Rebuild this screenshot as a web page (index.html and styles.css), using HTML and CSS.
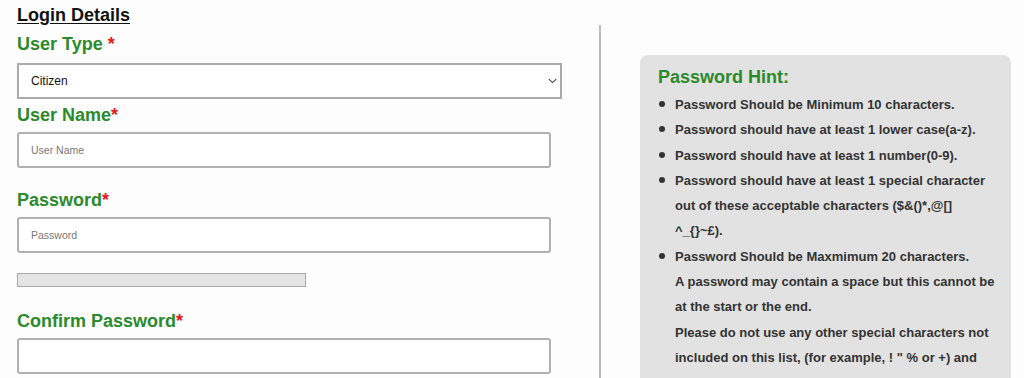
FILE: index.html
```html
<!DOCTYPE html>
<html lang="en">
<head>
<meta charset="utf-8">
<title>Login Details</title>
<link rel="stylesheet" href="styles.css">
</head>
<body>
<div class="page">
  <section class="form-col">
    <h2 class="section-title">Login Details</h2>

    <label class="field-label lbl-type" for="usertype">User Type <span class="req">*</span></label>
    <div class="select-wrap">
      <select id="usertype" class="select">
        <option>Citizen</option>
      </select>
      <svg class="chevron" width="9" height="6" viewBox="0 0 9 6" aria-hidden="true">
        <path d="M0.8 1.2 L4.5 4.6 L8.2 1.2" fill="none" stroke="#444" stroke-width="1.1"/>
      </svg>
    </div>

    <label class="field-label lbl-name" for="username">User Name<span class="req">*</span></label>
    <input id="username" class="text-input" type="text" placeholder="User Name">

    <label class="field-label lbl-pass" for="password">Password<span class="req">*</span></label>
    <input id="password" class="text-input" type="password" placeholder="Password">

    <div class="strength"></div>

    <label class="field-label lbl-confirm" for="confirm">Confirm Password<span class="req">*</span></label>
    <input id="confirm" class="text-input" type="password">
  </section>

  <aside class="hint-col">
    <div class="hint-box">
      <h3 class="hint-title">Password Hint:</h3>
      <ul class="hint-list">
        <li>Password Should be Minimum 10 characters.</li>
        <li>Password should have at least 1 lower case(a-z).</li>
        <li>Password should have at least 1 number(0-9).</li>
        <li>Password should have at least 1 special character out of these acceptable characters ($&amp;()*,@[] ^_{}~£).</li>
        <li>Password Should be Maxmimum 20 characters.<br>A password may contain a space but this cannot be at the start or the end.<br>Please do not use any other special characters not included on this list, (for example, ! " % or +) and</li>
      </ul>
    </div>
  </aside>
</div>
</body>
</html>
```

FILE: styles.css
```css
* { box-sizing: border-box; }

html, body {
  margin: 0;
  padding: 0;
  background: #fdfdfd;
  font-family: "Liberation Sans", Arial, sans-serif;
  overflow: hidden;
}

.page {
  display: flex;
  align-items: flex-start;
  width: 1024px;
}

.form-col {
  width: 599px;
  flex: none;
  padding: 0 0 0 17px;
  display: flex;
  flex-direction: column;
  align-items: flex-start;
}

.section-title {
  margin: 4px 0 0 0;
  font-size: 18px;
  line-height: 22px;
  font-weight: bold;
  color: #111;
  text-decoration: underline;
  text-underline-offset: 2px;
}

.field-label {
  display: block;
  font-size: 18px;
  line-height: 22px;
  font-weight: bold;
  color: #2b8a2b;
}

.req { color: #e21a1a; }

.lbl-type { margin-top: 7px; }
.lbl-name { margin-top: 5px; }
.lbl-pass { margin-top: 21px; }
.lbl-confirm { margin-top: 23px; }

.select-wrap {
  position: relative;
  margin-top: 8px;
  width: 545px;
  height: 36px;
}

.select {
  -webkit-appearance: none;
  appearance: none;
  display: block;
  width: 100%;
  height: 100%;
  border: 2px solid #ababab;
  border-radius: 0;
  background: #fff;
  padding: 0 0 0 12px;
  font-family: "Liberation Sans", Arial, sans-serif;
  font-size: 12px;
  color: #111;
  outline: none;
}

.chevron {
  position: absolute;
  right: 5px;
  top: 15px;
  pointer-events: none;
}

.text-input {
  margin-top: 6px;
  width: 534px;
  height: 36px;
  border: 2px solid #b0b0b0;
  border-radius: 3px;
  background: #fff;
  padding: 0 12px;
  font-family: "Liberation Sans", Arial, sans-serif;
  font-size: 10.5px;
  color: #222;
}

.text-input::placeholder { color: #777; }

.strength {
  margin-top: 20px;
  width: 289px;
  height: 14px;
  background: #e4e4e4;
  border: 1px solid #aaa;
}

.hint-col {
  flex: 1;
  margin-top: 25px;
  min-height: 400px;
  border-left: 2px solid #bbb;
  padding: 30px 13px 0 39px;
}

.hint-box {
  background: #e2e2e2;
  border-radius: 8px;
  padding: 11px 10px 20px 18px;
  min-height: 400px;
}

.hint-title {
  margin: 0;
  font-size: 18px;
  line-height: 22px;
  font-weight: bold;
  color: #2b8a2b;
}

.hint-list {
  list-style: none;
  margin: 4px 0 0 0;
  padding: 0 0 0 17px;
}

.hint-list li {
  position: relative;
  font-size: 13px;
  line-height: 25.3px;
  font-weight: bold;
  color: #333;
}

.hint-list li::before {
  content: "";
  position: absolute;
  left: -16px;
  top: 9px;
  width: 6px;
  height: 6px;
  border-radius: 50%;
  background: #333;
}
```
